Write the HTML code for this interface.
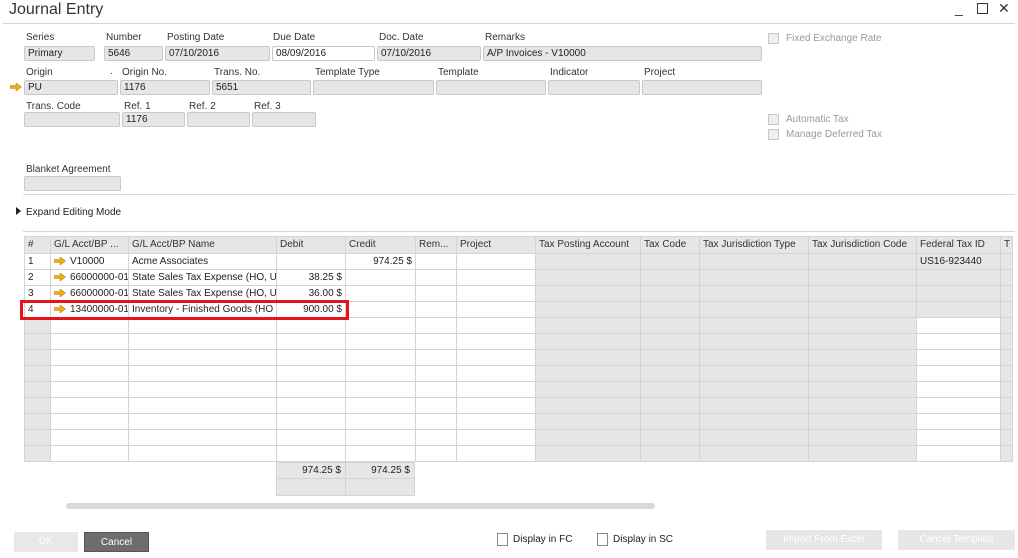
<!DOCTYPE html>
<html><head><meta charset="utf-8"><style>
*{box-sizing:border-box;margin:0;padding:0}
body{width:1018px;height:558px;background:#fff;font-family:"Liberation Sans","DejaVu Sans",sans-serif;font-size:10px;color:#222;position:relative;overflow:hidden}
.a{position:absolute;white-space:nowrap}
.lb{position:absolute;font-size:10px;color:#333}
.f{position:absolute;height:15px;background:#e6e6e6;border:1px solid #c8c8c8;border-radius:2px;padding:1px 3px;font-size:10px;line-height:12px}
.w{background:#fff}
.hr{position:absolute;height:1px;background:#d6d6d6}
table{position:absolute;left:24px;top:236px;border-collapse:collapse;table-layout:fixed;width:988px}
td{border:1px solid #d4d4d4;height:16px;padding:0 3px;font-size:10px;white-space:nowrap;overflow:hidden;line-height:14px}
tr.h td{background:#e6e6e6;height:17px;color:#333}
td.g{background:#e6e6e6}
.r{text-align:right}
.cb{position:absolute;width:11px;height:11px;border:1px solid #c8c8c8;background:#eee}
.btn{position:absolute;height:20px;text-align:center;line-height:20px;font-size:10px;color:#fff}
</style></head><body>
<svg width="0" height="0" style="position:absolute"><defs><symbol id="ar" viewBox="0 0 12 8"><path d="M0 2.5H6V0L11.5 4L6 8V5.5H0Z" fill="#f0a81c" stroke="#c98a10" stroke-width="0.6"/></symbol></defs></svg>
<div class="a" style="left:9px;top:1px;font-size:16px;color:#333">Journal Entry</div>
<div class="a" style="left:955px;top:0;font-size:14px;color:#333">_</div>
<div class="a" style="left:977px;top:3px;width:11px;height:11px;border:1.5px solid #333"></div>
<div class="a" style="left:998px;top:0;font-size:14px;font-weight:bold;color:#333">✕</div>
<div class="hr" style="left:3px;top:23px;width:1012px"></div>

<div class="lb" style="left:26px;top:32px">Series</div>
<div class="lb" style="left:106px;top:32px">Number</div>
<div class="lb" style="left:167px;top:32px">Posting Date</div>
<div class="lb" style="left:273px;top:32px">Due Date</div>
<div class="lb" style="left:379px;top:32px">Doc. Date</div>
<div class="lb" style="left:485px;top:32px">Remarks</div>
<div class="f" style="left:24px;top:46px;width:71px">Primary</div>
<div class="f" style="left:104px;top:46px;width:59px">5646</div>
<div class="f" style="left:165px;top:46px;width:105px">07/10/2016</div>
<div class="f w" style="left:272px;top:46px;width:103px">08/09/2016</div>
<div class="f" style="left:377px;top:46px;width:104px">07/10/2016</div>
<div class="f" style="left:483px;top:46px;width:279px">A/P Invoices - V10000</div>

<div class="lb" style="left:26px;top:67px">Origin</div>
<div class="lb" style="left:110px;top:66px">.</div>
<div class="lb" style="left:122px;top:67px">Origin No.</div>
<div class="lb" style="left:214px;top:67px">Trans. No.</div>
<div class="lb" style="left:315px;top:67px">Template Type</div>
<div class="lb" style="left:438px;top:67px">Template</div>
<div class="lb" style="left:550px;top:67px">Indicator</div>
<div class="lb" style="left:644px;top:67px">Project</div>
<svg class="a" style="left:10px;top:83px" width="12" height="8"><use href="#ar"/></svg>
<div class="f" style="left:24px;top:80px;width:94px">PU</div>
<div class="f" style="left:120px;top:80px;width:90px">1176</div>
<div class="f" style="left:212px;top:80px;width:99px">5651</div>
<div class="f" style="left:313px;top:80px;width:121px"></div>
<div class="f" style="left:436px;top:80px;width:110px"></div>
<div class="f" style="left:548px;top:80px;width:92px"></div>
<div class="f" style="left:642px;top:80px;width:120px"></div>

<div class="lb" style="left:26px;top:101px">Trans. Code</div>
<div class="lb" style="left:124px;top:101px">Ref. 1</div>
<div class="lb" style="left:189px;top:101px">Ref. 2</div>
<div class="lb" style="left:254px;top:101px">Ref. 3</div>
<div class="f" style="left:24px;top:112px;width:96px"></div>
<div class="f" style="left:122px;top:112px;width:63px">1176</div>
<div class="f" style="left:187px;top:112px;width:63px"></div>
<div class="f" style="left:252px;top:112px;width:64px"></div>

<div class="lb" style="left:26px;top:164px">Blanket Agreement</div>
<div class="f" style="left:24px;top:176px;width:97px"></div>
<div class="hr" style="left:23px;top:194px;width:992px"></div>

<div class="cb" style="left:768px;top:33px"></div><div class="lb" style="left:786px;top:33px;color:#999">Fixed Exchange Rate</div>
<div class="cb" style="left:768px;top:114px"></div><div class="lb" style="left:786px;top:114px;color:#999">Automatic Tax</div>
<div class="cb" style="left:768px;top:129px"></div><div class="lb" style="left:786px;top:129px;color:#999">Manage Deferred Tax</div>

<div class="a" style="left:16px;top:207px;width:0;height:0;border-left:5px solid #222;border-top:4px solid transparent;border-bottom:4px solid transparent"></div>
<div class="lb" style="left:26px;top:207px;color:#222">Expand Editing Mode</div>
<div class="hr" style="left:23px;top:231px;width:992px"></div>

<table>
<colgroup><col style="width:26px"><col style="width:78px"><col style="width:148px"><col style="width:69px"><col style="width:70px"><col style="width:41px"><col style="width:79px"><col style="width:105px"><col style="width:59px"><col style="width:109px"><col style="width:108px"><col style="width:84px"><col style="width:12px"></colgroup>
<tr class="h"><td>#</td><td>G/L Acct/BP ...</td><td>G/L Acct/BP Name</td><td>Debit</td><td>Credit</td><td>Rem...</td><td>Project</td><td>Tax Posting Account</td><td>Tax Code</td><td>Tax Jurisdiction Type</td><td>Tax Jurisdiction Code</td><td>Federal Tax ID</td><td>T</td></tr>
<tr><td>1</td><td><svg width="12" height="8" style="vertical-align:middle;margin-right:4px"><use href="#ar"/></svg>V10000</td><td>Acme Associates</td><td></td><td class="r">974.25 $</td><td></td><td></td><td class="g"></td><td class="g"></td><td class="g"></td><td class="g"></td><td class="g">US16-923440</td><td class="g"></td></tr>
<tr><td>2</td><td><svg width="12" height="8" style="vertical-align:middle;margin-right:4px"><use href="#ar"/></svg>66000000-01-0</td><td>State Sales Tax Expense (HO, US</td><td class="r">38.25 $</td><td></td><td></td><td></td><td class="g"></td><td class="g"></td><td class="g"></td><td class="g"></td><td class="g"></td><td class="g"></td></tr>
<tr><td>3</td><td><svg width="12" height="8" style="vertical-align:middle;margin-right:4px"><use href="#ar"/></svg>66000000-01-0</td><td>State Sales Tax Expense (HO, US</td><td class="r">36.00 $</td><td></td><td></td><td></td><td class="g"></td><td class="g"></td><td class="g"></td><td class="g"></td><td class="g"></td><td class="g"></td></tr>
<tr><td>4</td><td><svg width="12" height="8" style="vertical-align:middle;margin-right:4px"><use href="#ar"/></svg>13400000-01-0</td><td>Inventory - Finished Goods (HO</td><td class="r">900.00 $</td><td></td><td></td><td></td><td class="g"></td><td class="g"></td><td class="g"></td><td class="g"></td><td class="g"></td><td class="g"></td></tr>
<tr><td class="g"></td><td></td><td></td><td></td><td></td><td></td><td></td><td class="g"></td><td class="g"></td><td class="g"></td><td class="g"></td><td></td><td class="g"></td></tr>
<tr><td class="g"></td><td></td><td></td><td></td><td></td><td></td><td></td><td class="g"></td><td class="g"></td><td class="g"></td><td class="g"></td><td></td><td class="g"></td></tr>
<tr><td class="g"></td><td></td><td></td><td></td><td></td><td></td><td></td><td class="g"></td><td class="g"></td><td class="g"></td><td class="g"></td><td></td><td class="g"></td></tr>
<tr><td class="g"></td><td></td><td></td><td></td><td></td><td></td><td></td><td class="g"></td><td class="g"></td><td class="g"></td><td class="g"></td><td></td><td class="g"></td></tr>
<tr><td class="g"></td><td></td><td></td><td></td><td></td><td></td><td></td><td class="g"></td><td class="g"></td><td class="g"></td><td class="g"></td><td></td><td class="g"></td></tr>
<tr><td class="g"></td><td></td><td></td><td></td><td></td><td></td><td></td><td class="g"></td><td class="g"></td><td class="g"></td><td class="g"></td><td></td><td class="g"></td></tr>
<tr><td class="g"></td><td></td><td></td><td></td><td></td><td></td><td></td><td class="g"></td><td class="g"></td><td class="g"></td><td class="g"></td><td></td><td class="g"></td></tr>
<tr><td class="g"></td><td></td><td></td><td></td><td></td><td></td><td></td><td class="g"></td><td class="g"></td><td class="g"></td><td class="g"></td><td></td><td class="g"></td></tr>
<tr><td class="g"></td><td></td><td></td><td></td><td></td><td></td><td></td><td class="g"></td><td class="g"></td><td class="g"></td><td class="g"></td><td></td><td class="g"></td></tr>
</table>
<div class="a" style="left:20px;top:300px;width:329px;height:20px;border:3px solid #e3141b"></div>

<div class="a" style="left:276px;top:462px;width:70px;height:17px;background:#e6e6e6;border:1px solid #d4d4d4;text-align:right;padding-right:4px;line-height:15px;font-size:10px">974.25 $</div>
<div class="a" style="left:345px;top:462px;width:70px;height:17px;background:#e6e6e6;border:1px solid #d4d4d4;text-align:right;padding-right:4px;line-height:15px;font-size:10px">974.25 $</div>
<div class="a" style="left:276px;top:478px;width:70px;height:18px;background:#e6e6e6;border:1px solid #d4d4d4"></div>
<div class="a" style="left:345px;top:478px;width:70px;height:18px;background:#e6e6e6;border:1px solid #d4d4d4"></div>
<div class="a" style="left:66px;top:503px;width:589px;height:6px;background:#d9d9d9;border-radius:3px"></div>

<div class="btn" style="left:14px;top:532px;width:64px;background:#e8e8e8">OK</div>
<div class="btn" style="left:84px;top:532px;width:65px;background:#6d6d6d;border:1px solid #555">Cancel</div>
<div class="cb" style="left:497px;top:533px;width:11px;height:13px;background:#fff;border-color:#888"></div><div class="lb" style="left:513px;top:534px;color:#222">Display in FC</div>
<div class="cb" style="left:597px;top:533px;width:11px;height:13px;background:#fff;border-color:#888"></div><div class="lb" style="left:613px;top:534px;color:#222">Display in SC</div>
<div class="btn" style="left:766px;top:530px;width:116px;background:#e6e6e6">Import From Excel</div>
<div class="btn" style="left:898px;top:530px;width:117px;background:#e6e6e6">Cancel Template</div>
</body></html>
